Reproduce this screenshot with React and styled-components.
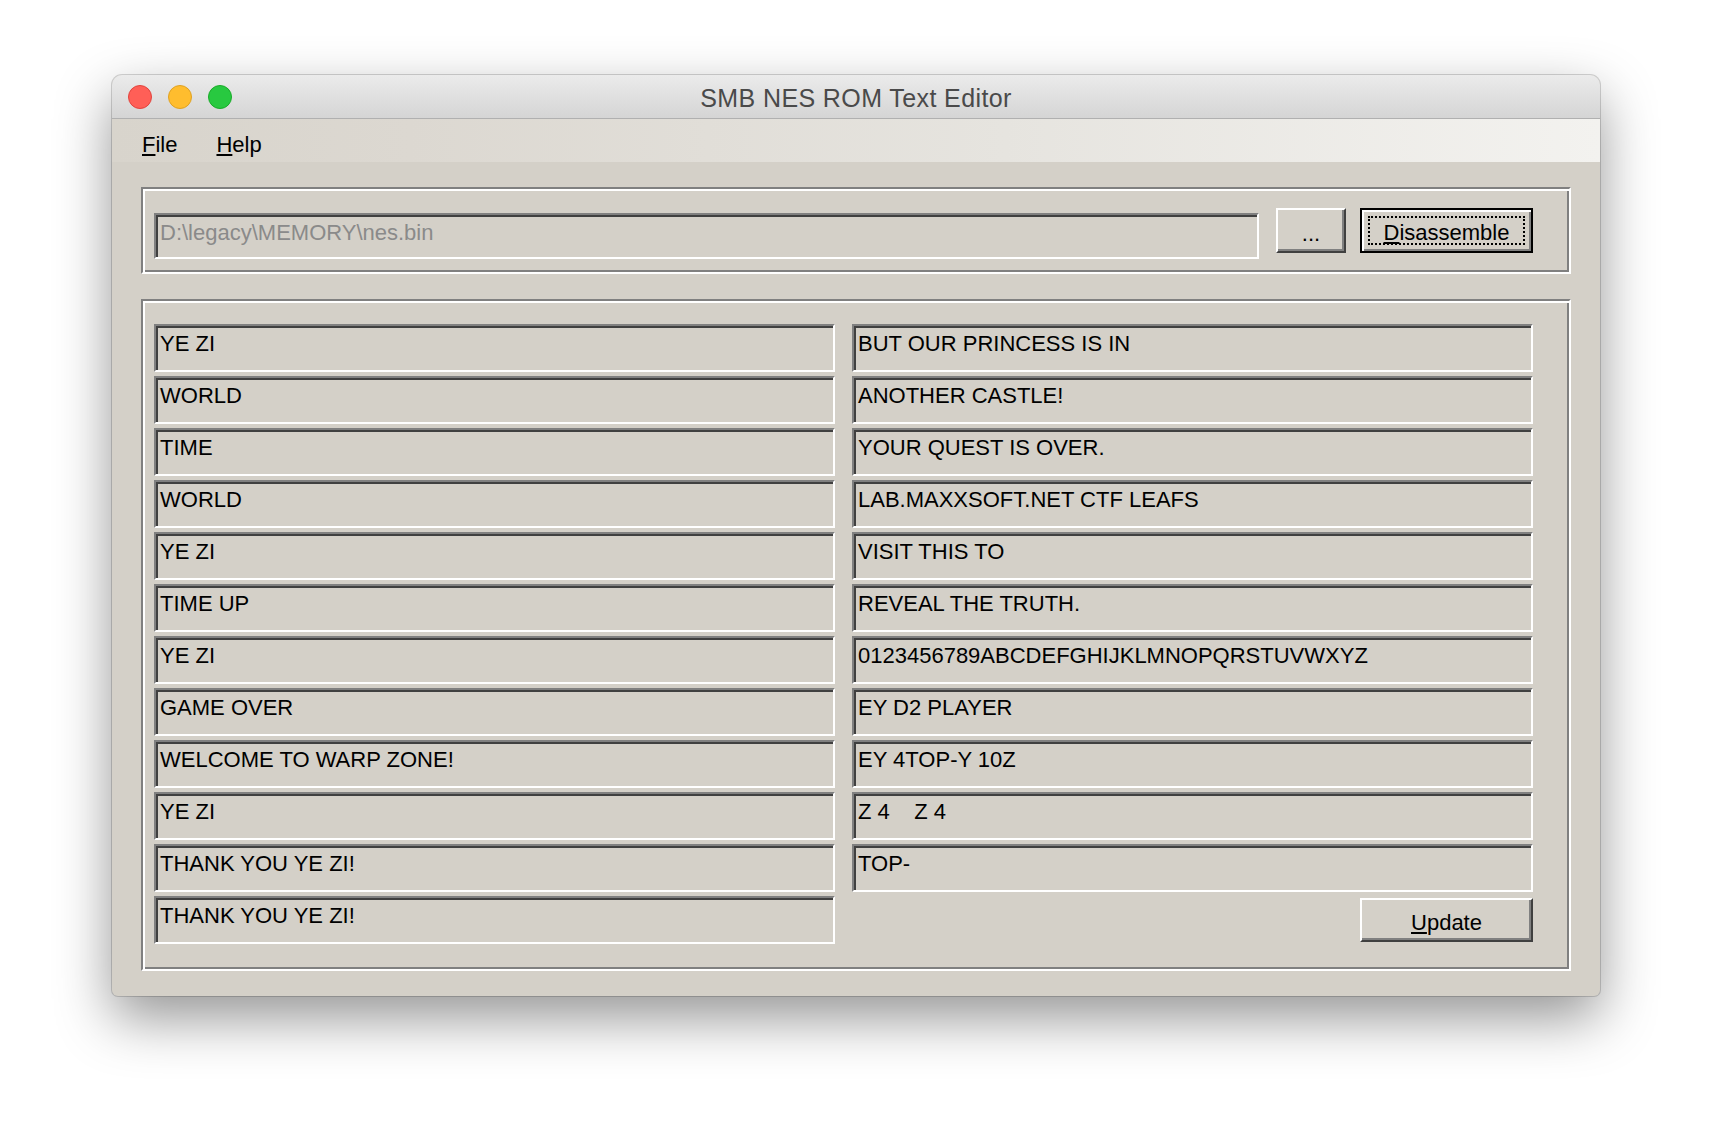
import React from 'react'
import styled, { createGlobalStyle } from 'styled-components'

const leftTexts = [
    'YE ZI',
    'WORLD',
    'TIME',
    'WORLD',
    'YE ZI',
    'TIME UP',
    'YE ZI',
    'GAME OVER',
    'WELCOME TO WARP ZONE!',
    'YE ZI',
    'THANK YOU YE ZI!',
    'THANK YOU YE ZI!',
]

const rightTexts = [
    'BUT OUR PRINCESS IS IN',
    'ANOTHER CASTLE!',
    'YOUR QUEST IS OVER.',
    'LAB.MAXXSOFT.NET CTF LEAFS',
    'VISIT THIS TO',
    'REVEAL THE TRUTH.',
    '0123456789ABCDEFGHIJKLMNOPQRSTUVWXYZ',
    'EY D2 PLAYER',
    'EY 4TOP-Y 10Z',
    'Z 4    Z 4',
    'TOP-',
]

function App() {
    return (
        <>
            <GlobalStyle />
            <Desktop>
                <Window>
                    <TitleBar>
                        <Lights>
                            <Light $color='#ff5f57' $edge='#e0443e' />
                            <Light $color='#ffbd2e' $edge='#dea123' />
                            <Light $color='#28c940' $edge='#1aab29' />
                        </Lights>
                        <Title>SMB NES ROM Text Editor</Title>
                    </TitleBar>

                    <MenuBar>
                        <MenuItem><Key>F</Key>ile</MenuItem>
                        <MenuItem><Key>H</Key>elp</MenuItem>
                    </MenuBar>

                    <Content>
                        <FileGroup>
                            <PathField>D:\legacy\MEMORY\nes.bin</PathField>
                            <Button $width={70}>...</Button>
                            <DefaultButton>
                                <FocusRing><Key>D</Key>isassemble</FocusRing>
                            </DefaultButton>
                        </FileGroup>

                        <TextGroup>
                            <Column>
                                {leftTexts.map((text, index) => (
                                    <TextField key={index}>{text}</TextField>
                                ))}
                            </Column>
                            <Column>
                                {rightTexts.map((text, index) => (
                                    <TextField key={index}>{text}</TextField>
                                ))}
                                <UpdateRow>
                                    <Button $width={173} $height={44}><Key>U</Key>pdate</Button>
                                </UpdateRow>
                            </Column>
                        </TextGroup>
                    </Content>
                </Window>
            </Desktop>
        </>
    )
}

export default App

const GlobalStyle = createGlobalStyle`
    html, body {
        margin: 0;
        padding: 0;
        background: #ffffff;
    }
    body {
        font-family: "Liberation Sans", Arial, sans-serif;
    }
`

const Desktop = styled.div`
    width: 1712px;
    height: 1144px;
    padding: 75px 0 0 112px;
    box-sizing: border-box;
`

const Window = styled.div`
    width: 1488px;
    background: #d4d0c8;
    border-radius: 10px 10px 6px 6px;
    overflow: hidden;
    box-shadow: 0 22px 55px rgba(0,0,0,0.42), 0 0 0 1px rgba(0,0,0,0.16);
`

const TitleBar = styled.div`
    position: relative;
    height: 43px;
    display: flex;
    align-items: center;
    justify-content: center;
    background: linear-gradient(to bottom, #ebebeb, #d5d5d5);
    border-bottom: 1px solid #b0b0b0;
`

const Lights = styled.div`
    position: absolute;
    left: 16px;
    top: 10px;
    display: flex;
    gap: 16px;
`

const Light = styled.span`
    width: 24px;
    height: 24px;
    box-sizing: border-box;
    border-radius: 50%;
    background: ${p => p.$color};
    border: 1px solid ${p => p.$edge};
`

const Title = styled.div`
    font-family: "Liberation Sans", Arial, sans-serif;
    font-size: 25px;
    letter-spacing: 0.4px;
    color: #4a4a4a;
    margin-top: 3px;
`

const MenuBar = styled.div`
    height: 43px;
    display: flex;
    gap: 39px;
    padding: 13px 0 0 30px;
    box-sizing: border-box;
    background: linear-gradient(to right, #d8d4cc 0%, #dcd8d1 20%, #e6e4df 60%, #f3f2ef 100%);
`

const MenuItem = styled.span`
    font-size: 22px;
    line-height: 25px;
    color: #000;
`

const Key = styled.span`
    text-decoration: underline;
    text-decoration-thickness: 2px;
    text-underline-offset: 2px;
`

const Content = styled.div`
    padding: 25px 29px 25px 29px;
    display: flex;
    flex-direction: column;
    gap: 25px;
`

const Etched = styled.div`
    box-sizing: border-box;
    border: 2px solid;
    border-color: #808080 #ffffff #ffffff #808080;
    box-shadow: inset 2px 2px #ffffff, inset -2px -2px #808080;
`

const FileGroup = styled(Etched)`
    height: 87px;
    display: flex;
    align-items: flex-start;
    padding: 19px 36px 0 11px;
`

const Sunken = styled.div`
    box-sizing: border-box;
    border: 2px solid;
    border-color: #808080 #ffffff #ffffff #808080;
    box-shadow: inset 2px 2px #404040, inset -2px -2px #d4d0c8;
    background: #d4d0c8;
    font-size: 22px;
    line-height: 25px;
    white-space: pre;
    overflow: hidden;
`

const PathField = styled(Sunken)`
    flex: 1;
    height: 46px;
    margin: 5px 17px 0 0;
    padding: 5px 4px 0 4px;
    color: #8a8a8a;
`

const Button = styled.div`
    box-sizing: border-box;
    width: ${p => p.$width}px;
    height: ${p => p.$height || 45}px;
    margin-right: ${p => (p.$width === 70 ? 14 : 0)}px;
    display: flex;
    align-items: center;
    justify-content: center;
    padding-top: 5px;
    border: 2px solid;
    border-color: #ffffff #404040 #404040 #ffffff;
    box-shadow: inset -2px -2px #808080;
    font-size: 22px;
    line-height: 25px;
    color: #000;
`

const DefaultButton = styled.div`
    box-sizing: border-box;
    width: 173px;
    height: 45px;
    display: flex;
    padding: 6px;
    border: 2px solid #000;
    box-shadow: inset 2px 2px #ffffff, inset -2px -2px #808080;
    font-size: 22px;
    line-height: 25px;
    color: #000;
`

const FocusRing = styled.div`
    flex: 1;
    box-sizing: border-box;
    display: flex;
    align-items: center;
    justify-content: center;
    padding-top: 4px;
    border: 2px dotted #000;
`

const TextGroup = styled(Etched)`
    display: grid;
    grid-template-columns: 681px 681px;
    column-gap: 17px;
    align-items: start;
    padding: 23px 36px 25px 11px;
`

const Column = styled.div`
    display: flex;
    flex-direction: column;
    gap: 4px;
`

const TextField = styled(Sunken)`
    height: 48px;
    padding: 5px 4px 0 4px;
    color: #000;
`

const UpdateRow = styled.div`
    display: flex;
    justify-content: flex-end;
    margin-top: 2px;
`
